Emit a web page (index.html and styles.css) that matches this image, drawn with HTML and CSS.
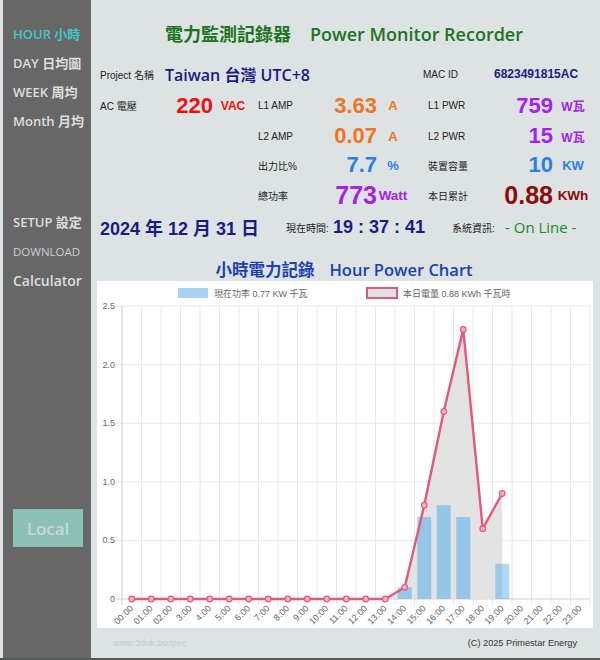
FILE: index.html
```html
<!DOCTYPE html>
<html lang="zh-Hant">
<head>
    <meta charset="UTF-8">
    <meta name="viewport" content="width=device-width, initial-scale=1.0">
    <title>Power Monitor Recorder</title>
    <link rel="stylesheet" href="styles.css">
</head>
<body>
    <div class="page">
        <nav class="side">
            <a class="nav-item active" href="#">HOUR 小時</a>
            <a class="nav-item" href="#">DAY 日均圖</a>
            <a class="nav-item" href="#">WEEK 周均</a>
            <a class="nav-item" href="#">Month 月均</a>
            <a class="nav-item nav-gap" href="#">SETUP 設定</a>
            <a class="nav-item nav-small" href="#">DOWNLOAD</a>
            <a class="nav-item nav-big" href="#">Calculator</a>
            <button class="local">Local</button>
        </nav>

        <main class="panel">
            <h1 class="title">電力監測記錄器<span class="title-en">Power Monitor Recorder</span></h1>

            <div class="readings">
                <div class="lbl">Project 名稱</div>
                <div class="project">Taiwan 台灣 UTC+8</div>
                <div class="lbl lbl-mac">MAC ID</div>
                <div class="mac">6823491815AC</div>

                <div class="lbl">AC 電壓</div>
                <div class="val red">220</div>
                <div class="unit red">VAC</div>
                <div class="lbl lbl-mid">L1 AMP</div>
                <div class="val orange">3.63</div>
                <div class="unit unit-a orange">A</div>
                <div class="lbl lbl-right">L1 PWR</div>
                <div class="val purple">759</div>
                <div class="unit purple">W瓦</div>

                <div class="lbl lbl-mid col4">L2 AMP</div>
                <div class="val orange">0.07</div>
                <div class="unit unit-a orange">A</div>
                <div class="lbl lbl-right">L2 PWR</div>
                <div class="val purple">15</div>
                <div class="unit purple">W瓦</div>

                <div class="lbl lbl-mid col4">出力比%</div>
                <div class="val blue">7.7</div>
                <div class="unit unit-a blue">%</div>
                <div class="lbl lbl-right">裝置容量</div>
                <div class="val blue">10</div>
                <div class="unit unit-a blue">KW</div>

                <div class="lbl lbl-mid col4">總功率</div>
                <div class="val val-big purple">773</div>
                <div class="unit unit-big purple">Watt</div>
                <div class="lbl lbl-right">本日累計</div>
                <div class="val val-big darkred">0.88</div>
                <div class="unit unit-big darkred">KWh</div>
            </div>

            <div class="status">
                <span class="date">2024 年 12 月 31 日</span>
                <span class="status-lbl">現在時間:</span>
                <span class="clock">19 : 37 : 41</span>
                <span class="status-lbl status-lbl-wide">系統資訊:</span>
                <span class="online">- On Line -</span>
            </div>

            <h2 class="chart-title">小時電力記錄<span class="chart-title-en">Hour Power Chart</span></h2>

            <div class="chart">
                <svg width="496" height="347" viewBox="0 0 496 347">
                    <!-- legend -->
                    <rect x="81" y="7" width="30" height="10" fill="#a8d2f2"/>
                    <text class="legend" x="117" y="15.5">現在功率 0.77 KW 千瓦</text>
                    <rect x="270" y="7" width="30" height="10" fill="#e2e2e2" stroke="#e0587a" stroke-width="2"/>
                    <text class="legend" x="306" y="15.5">本日電量 0.88 KWh 千瓦時</text>

                    <!-- grid -->
                    <path stroke="#e8e8e8" stroke-width="1" fill="none"
                        d="M44.5 25V324M64 25V324M83.5 25V324M103 25V324M122.5 25V324M142 25V324M161.5 25V324M181 25V324M200.5 25V324M220 25V324M239.5 25V324M259 25V324M278.5 25V324M298 25V324M317.5 25V324M337 25V324M356.5 25V324M376 25V324M395.5 25V324M415 25V324M434.5 25V324M454 25V324M473.5 25V324M493 25V324
                           M19 25H493M19 83.6H493M19 142.2H493M19 200.8H493M19 259.4H493"/>
                    <path stroke="#cfcfcf" stroke-width="1" fill="none" d="M25 25V324M19 318H493"/>

                    <!-- y axis -->
                    <g class="tick" text-anchor="end">
                        <text x="18" y="28">2.5</text>
                        <text x="18" y="86.6">2.0</text>
                        <text x="18" y="145.2">1.5</text>
                        <text x="18" y="203.8">1.0</text>
                        <text x="18" y="262.4">0.5</text>
                        <text x="18" y="321">0</text>
                    </g>

                    <!-- daily energy fill -->
                    <path fill="#e3e3e3" d="M34.75 318L288.25 318L307.75 306.3L327.25 224.2L346.75 130.5L366.25 48.4L385.75 247.7L405.25 212.5L405.25 318Z"/>

                    <!-- hourly power bars -->
                    <g fill="rgba(54,162,235,0.45)">
                        <rect x="300.75" y="306.3" width="14" height="11.7"/>
                        <rect x="320.25" y="236" width="14" height="82"/>
                        <rect x="339.75" y="224.2" width="14" height="93.8"/>
                        <rect x="359.25" y="236" width="14" height="82"/>
                        <rect x="398.25" y="282.8" width="14" height="35.2" fill="rgba(54,162,235,0.4)"/>
                    </g>

                    <!-- daily energy line -->
                    <polyline fill="none" stroke="#e4587a" stroke-width="2.4" stroke-linejoin="round"
                        points="34.75,318 288.25,318 307.75,306.3 327.25,224.2 346.75,130.5 366.25,48.4 385.75,247.7 405.25,212.5"/>
                    <g fill="#f2b4c2" stroke="#e4587a" stroke-width="1.2">
                        <circle cx="34.75" cy="318" r="2.8"/>
                        <circle cx="54.25" cy="318" r="2.8"/>
                        <circle cx="73.75" cy="318" r="2.8"/>
                        <circle cx="93.25" cy="318" r="2.8"/>
                        <circle cx="112.75" cy="318" r="2.8"/>
                        <circle cx="132.25" cy="318" r="2.8"/>
                        <circle cx="151.75" cy="318" r="2.8"/>
                        <circle cx="171.25" cy="318" r="2.8"/>
                        <circle cx="190.75" cy="318" r="2.8"/>
                        <circle cx="210.25" cy="318" r="2.8"/>
                        <circle cx="229.75" cy="318" r="2.8"/>
                        <circle cx="249.25" cy="318" r="2.8"/>
                        <circle cx="268.75" cy="318" r="2.8"/>
                        <circle cx="288.25" cy="318" r="2.8"/>
                        <circle cx="307.75" cy="306.3" r="2.8"/>
                        <circle cx="327.25" cy="224.2" r="2.8"/>
                        <circle cx="346.75" cy="130.5" r="2.8"/>
                        <circle cx="366.25" cy="48.4" r="2.8"/>
                        <circle cx="385.75" cy="247.7" r="2.8"/>
                        <circle cx="405.25" cy="212.5" r="2.8"/>
                    </g>

                    <!-- x axis -->
                    <g class="tick" text-anchor="end">
                        <text transform="translate(36.75 328) rotate(-45)">00:00</text>
                        <text transform="translate(56.25 328) rotate(-45)">01:00</text>
                        <text transform="translate(75.75 328) rotate(-45)">02:00</text>
                        <text transform="translate(95.25 328) rotate(-45)">3:00</text>
                        <text transform="translate(114.75 328) rotate(-45)">4:00</text>
                        <text transform="translate(134.25 328) rotate(-45)">5:00</text>
                        <text transform="translate(153.75 328) rotate(-45)">6:00</text>
                        <text transform="translate(173.25 328) rotate(-45)">7:00</text>
                        <text transform="translate(192.75 328) rotate(-45)">8:00</text>
                        <text transform="translate(212.25 328) rotate(-45)">9:00</text>
                        <text transform="translate(231.75 328) rotate(-45)">10:00</text>
                        <text transform="translate(251.25 328) rotate(-45)">11:00</text>
                        <text transform="translate(270.75 328) rotate(-45)">12:00</text>
                        <text transform="translate(290.25 328) rotate(-45)">13:00</text>
                        <text transform="translate(309.75 328) rotate(-45)">14:00</text>
                        <text transform="translate(329.25 328) rotate(-45)">15:00</text>
                        <text transform="translate(348.75 328) rotate(-45)">16:00</text>
                        <text transform="translate(368.25 328) rotate(-45)">17:00</text>
                        <text transform="translate(387.75 328) rotate(-45)">18:00</text>
                        <text transform="translate(407.25 328) rotate(-45)">19:00</text>
                        <text transform="translate(426.75 328) rotate(-45)">20:00</text>
                        <text transform="translate(446.25 328) rotate(-45)">21:00</text>
                        <text transform="translate(465.75 328) rotate(-45)">22:00</text>
                        <text transform="translate(485.25 328) rotate(-45)">23:00</text>
                    </g>
                </svg>
            </div>

            <footer class="foot">
                <span class="site">www.3dok.biz/pec</span>
                <span>(C) 2025 Primestar Energy</span>
            </footer>
        </main>
    </div>
</body>
</html>
```

FILE: styles.css
```css
body {
    margin: 0;
    background-color: #dde3e3;
    font-family: "Liberation Sans", "Noto Sans CJK TC", sans-serif;
}

.page {
    display: flex;
    height: 658px;
    padding-left: 3px;
    border-bottom: 2px solid #555a58;
}

/* left menu */
.side {
    width: 88px;
    background-color: #676767;
    display: flex;
    flex-direction: column;
    padding-top: 20px;
}

.nav-item {
    display: block;
    height: 29px;
    line-height: 29px;
    padding-left: 10px;
    color: #dedede;
    font-family: "Open Sans", "Noto Sans CJK TC", sans-serif;
    font-size: 13px;
    font-weight: 600;
    text-decoration: none;
    white-space: nowrap;
}

.nav-item.active {
    color: #3ec8c8;
}

.nav-gap {
    margin-top: 72px;
}

.nav-small {
    font-size: 11.5px;
    font-weight: normal;
    color: #cfcfcf;
}

.nav-big {
    font-size: 14px;
}

.local {
    margin: 214px 0 0 10px;
    width: 70px;
    height: 38px;
    border: none;
    background-color: #8cc0b5;
    color: #cad7d3;
    font-family: "Open Sans", sans-serif;
    font-size: 17px;
    font-weight: 600;
    padding: 0;
}

/* main panel */
.panel {
    width: 506px;
    background-color: #dde3e3;
}

.title {
    margin: 0;
    padding-top: 19px;
    height: 30px;
    line-height: 30px;
    text-align: center;
    font-family: "Open Sans", "Noto Sans CJK TC", sans-serif;
    font-size: 18px;
    font-weight: 600;
    color: #1d741f;
}

.title-en {
    margin-left: 19px;
}

.readings {
    display: grid;
    grid-template-columns: 60px 53px 40px 67px 57px 32px 81px 63px 40px;
    grid-template-rows: 30px 33px 28px 30px 30px;
    align-items: center;
    margin-top: 10px;
    padding-left: 9px;
    white-space: nowrap;
}

.lbl {
    font-size: 10px;
    color: #222;
}

.lbl-mid {
    padding-left: 5px;
}

.lbl-right {
    padding-left: 19px;
}

.lbl-mac {
    padding-left: 14px;
}

.col4 {
    grid-column-start: 4;
}

.project {
    grid-column: 2 / 7;
    padding-left: 5px;
    font-family: "Open Sans", "Noto Sans CJK TC", sans-serif;
    font-size: 16px;
    font-weight: 600;
    color: #1b1b86;
}

.mac {
    grid-column: 8 / 10;
    padding-left: 4px;
    font-size: 12px;
    font-weight: bold;
    color: #1b1b86;
}

.val {
    text-align: right;
    font-size: 22px;
    font-weight: bold;
}

.val-big {
    font-size: 25px;
}

.unit {
    text-align: center;
    font-size: 12px;
    font-weight: bold;
}

.unit-a {
    font-size: 13px;
}

.unit-big {
    font-size: 13.5px;
}

.red { color: #ee1111; }
.orange { color: #f07422; }
.purple { color: #a222ee; }
.blue { color: #2b80e2; }
.darkred { color: #8c0c0c; }

.status {
    display: flex;
    align-items: center;
    height: 34px;
    padding-left: 9px;
    white-space: nowrap;
}

.date {
    width: 186px;
    font-size: 18px;
    font-weight: bold;
    color: #1b1b86;
}

.status-lbl {
    width: 47px;
    font-size: 10px;
    color: #222;
}

.status-lbl-wide {
    width: 53px;
}

.clock {
    width: 119px;
    font-size: 18px;
    font-weight: bold;
    color: #1b1b86;
}

.online {
    font-family: "Open Sans", sans-serif;
    font-size: 15px;
    color: #1f8a22;
}

.chart-title {
    margin: 15px 0 0;
    height: 22px;
    line-height: 22px;
    text-align: center;
    font-family: "Open Sans", "Noto Sans CJK TC", sans-serif;
    font-size: 16.5px;
    font-weight: 600;
    color: #1e40b2;
}

.chart-title-en {
    margin-left: 15px;
}

.chart {
    margin-left: 6px;
    width: 496px;
    height: 347px;
    background-color: #fff;
}

.chart svg {
    display: block;
}

.chart text {
    font-family: "Liberation Sans", "Noto Sans CJK TC", sans-serif;
    font-size: 9px;
    fill: #666;
}

.foot {
    display: flex;
    justify-content: space-between;
    align-items: center;
    height: 30px;
    padding: 0 20px 0 22px;
    font-size: 9.2px;
    color: #333;
}

.site {
    color: #c4cbcb;
}
```
